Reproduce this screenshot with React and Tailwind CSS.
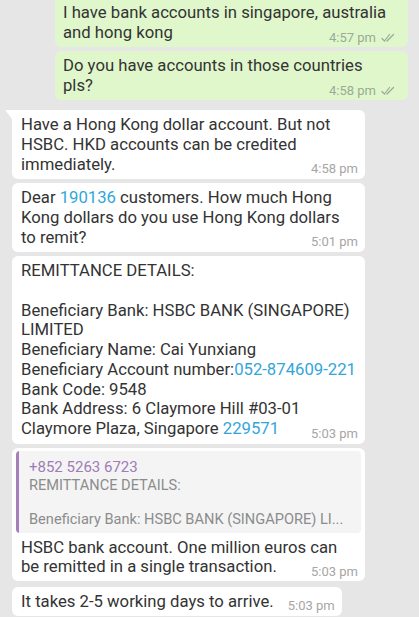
import React from "react";

const font = { fontFamily: "Roboto, 'Noto Sans', Arial, sans-serif" };

function Ticks() {
  return (
    <svg width="15" height="10" viewBox="0 0 15 10" className="ml-[5px] inline-block">
      <path d="M1 5.5 L3.5 8 L8.5 1.5" fill="none" stroke="#9aa898" strokeWidth="1.2" strokeLinecap="round" strokeLinejoin="round" />
      <path d="M6 8 L12.5 1.5" fill="none" stroke="#9aa898" strokeWidth="1.2" strokeLinecap="round" />
    </svg>
  );
}

function Time({ t, ticks }) {
  return (
    <span className={`flex items-center shrink-0 text-[13px] leading-[14px] translate-y-[5px] ${ticks ? "text-[#9aab96]" : "text-[#a6a6a6]"}`}>
      {t}
      {ticks && <Ticks />}
    </span>
  );
}

function Last({ children, t, ticks }) {
  return (
    <div className="flex justify-between items-center">
      <span className="whitespace-nowrap">{children}</span>
      <Time t={t} ticks={ticks} />
    </div>
  );
}

const Blue = ({ children }) => <span className="text-[#33a6d9]">{children}</span>;

export default function App() {
  return (
    <div style={font} className="w-[419px] h-[617px] overflow-hidden bg-[#e6e6e6] text-[#333333] text-[16.7px] leading-[19.75px] whitespace-nowrap">
      <div className="flex flex-col mt-[-2px]">
        {/* green 1 */}
        <div className="self-end mr-[11px] w-[353px] bg-[#e0f7cc] rounded-b-[6px] pl-[8px] pr-[12px] pt-[5px] pb-[4.5px]">
          <div>I have bank accounts in singapore, australia</div>
          <Last t="4:57 pm" ticks>and hong kong</Last>
        </div>
        {/* green 2 */}
        <div className="self-end mr-[11px] mt-[4px] w-[353px] bg-[#e0f7cc] rounded-[6px] pl-[8px] pr-[12px] pt-[5px] pb-[4.5px]">
          <div>Do you have accounts in those countries</div>
          <Last t="4:58 pm" ticks>pls?</Last>
        </div>

        {/* white 1 */}
        <div className="relative ml-[12px] mt-[10px] w-[353px] bg-white rounded-[6px] rounded-tl-none pl-[9px] pr-[7px] pt-[5px] pb-[4.75px]">
          <svg width="8" height="10" viewBox="0 0 8 10" className="absolute left-[-7px] top-0">
            <path d="M0 0 L8 0 L8 10 Z" fill="#ffffff" />
          </svg>
          <div>Have a Hong Kong dollar account. But not</div>
          <div>HSBC. HKD accounts can be credited</div>
          <Last t="4:58 pm">immediately.</Last>
        </div>

        {/* white 2 */}
        <div className="ml-[12px] mt-[4px] w-[353px] bg-white rounded-[6px] pl-[9px] pr-[7px] pt-[5px] pb-[4.75px]">
          <div>Dear <Blue>190136</Blue> customers. How much Hong</div>
          <div>Kong dollars do you use Hong Kong dollars</div>
          <Last t="5:01 pm">to remit?</Last>
        </div>

        {/* white 3 */}
        <div className="ml-[12px] mt-[4px] w-[353px] bg-white rounded-[6px] pl-[9px] pr-[7px] pt-[5px] pb-[4.75px]">
          <div>REMITTANCE DETAILS:</div>
          <div>&nbsp;</div>
          <div>Beneficiary Bank: HSBC BANK (SINGAPORE)</div>
          <div>LIMITED</div>
          <div>Beneficiary Name: Cai Yunxiang</div>
          <div>Beneficiary Account number:<Blue>052-874609-221</Blue></div>
          <div>Bank Code: 9548</div>
          <div>Bank Address: 6 Claymore Hill #03-01</div>
          <Last t="5:03 pm">Claymore Plaza, Singapore <Blue>229571</Blue></Last>
        </div>

        {/* white 4 with quote */}
        <div className="ml-[12px] mt-[4px] w-[353px] bg-white rounded-[6px] pt-[3px] pb-[3.5px]">
          <div className="mx-[4px] flex bg-[#f4f4f4] rounded-[4px] overflow-hidden">
            <div className="w-[3px] bg-[#a57fba] shrink-0" />
            <div className="pl-[10px] pt-[6px] pb-[5px] text-[14.6px] leading-[17px] text-[#8c8c8c]">
              <div className="text-[#a07bb6] text-[15px] leading-[20px]">+852 5263 6723</div>
              <div>REMITTANCE DETAILS:</div>
              <div>&nbsp;</div>
              <div>Beneficiary Bank: HSBC BANK (SINGAPORE) LI...</div>
            </div>
          </div>
          <div className="pl-[9px] pr-[7px] mt-[5px]">
            <div>HSBC bank account. One million euros can</div>
            <Last t="5:03 pm">be remitted in a single transaction.</Last>
          </div>
        </div>

        {/* white 5 */}
        <div className="ml-[12px] mt-[6px] w-fit bg-white rounded-[6px] pl-[9px] pr-[7px] pt-[5px] pb-[4.5px]">
          <div className="flex items-center gap-[14px]">
            <span>It takes 2-5 working days to arrive.</span>
            <Time t="5:03 pm" />
          </div>
        </div>
      </div>
    </div>
  );
}
